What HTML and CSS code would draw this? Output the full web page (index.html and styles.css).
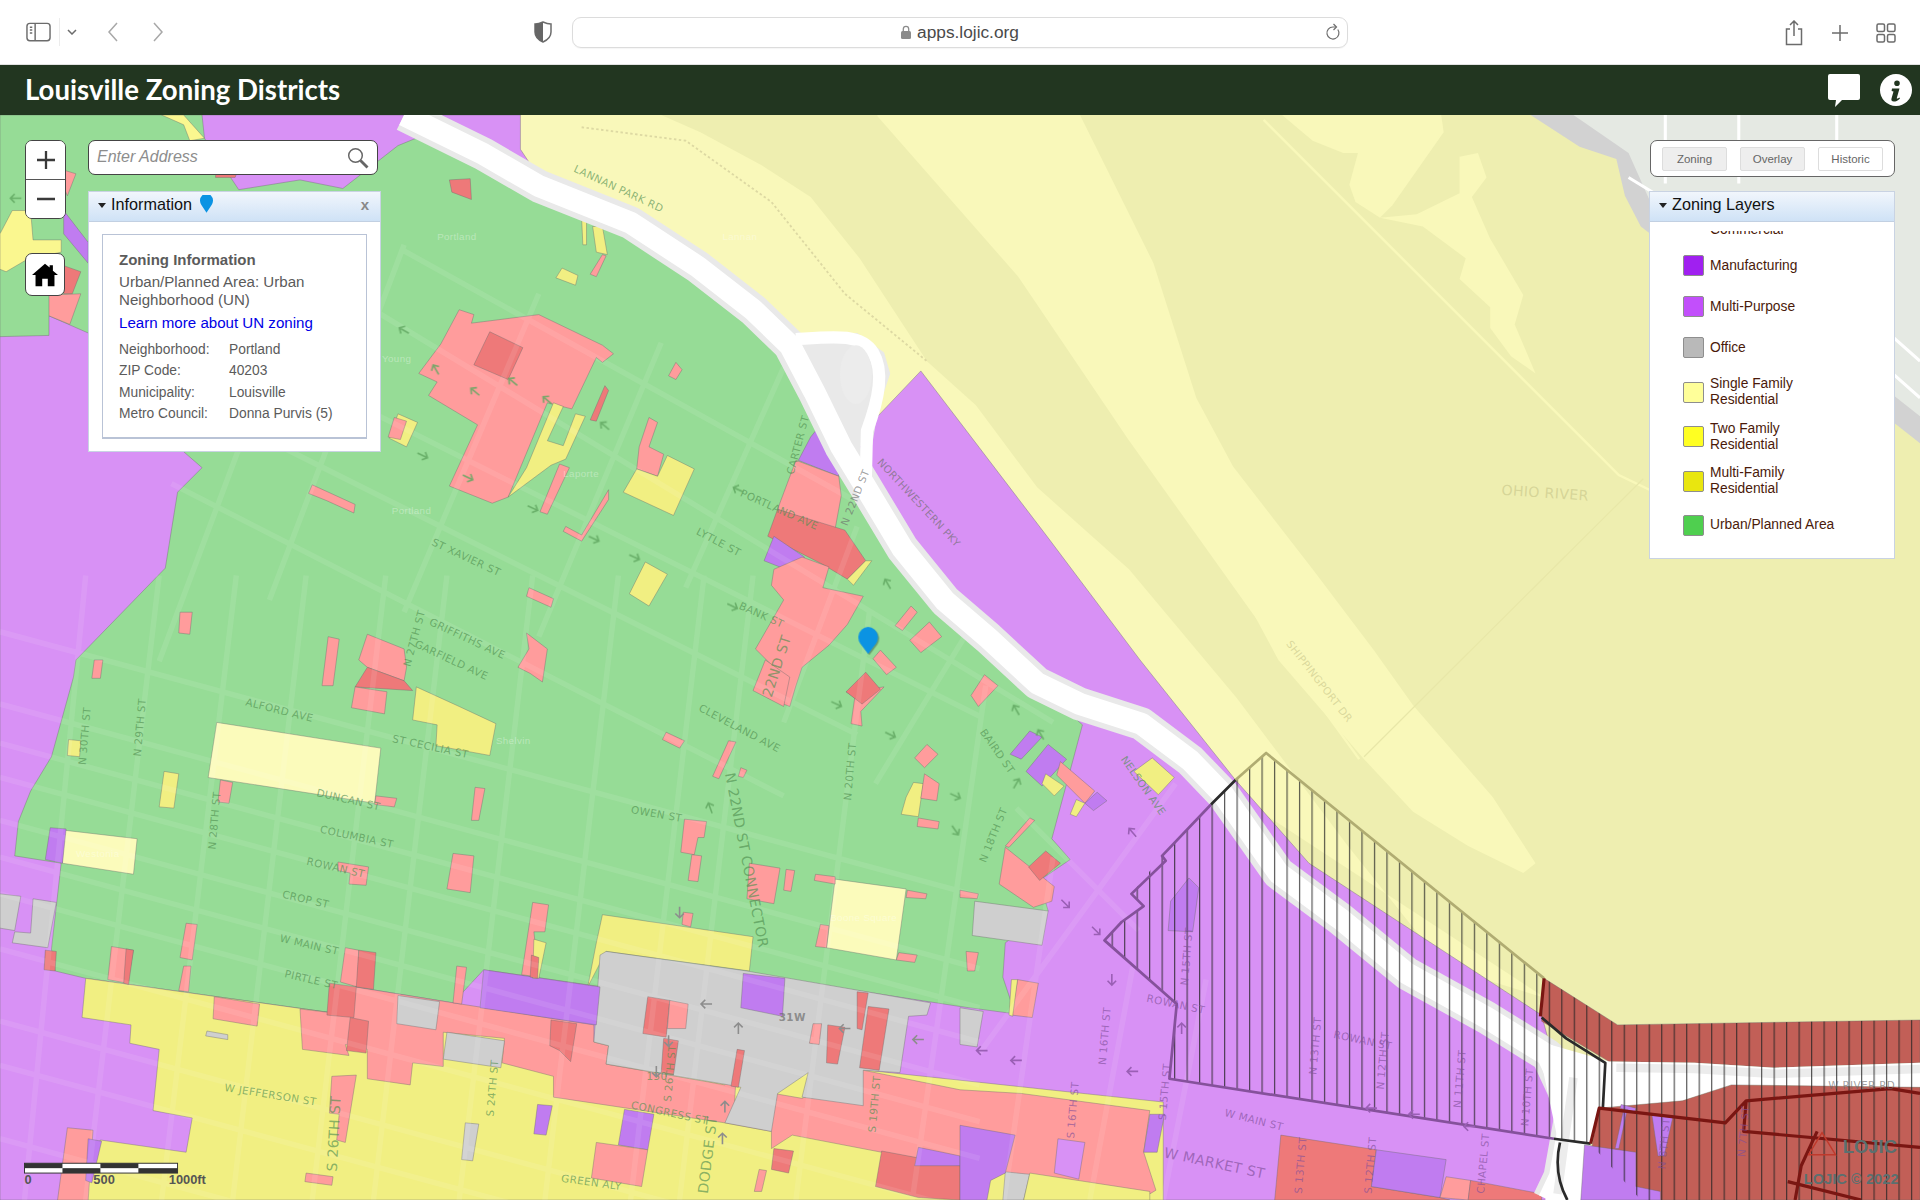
FILE: index.html
```html
<!DOCTYPE html>
<html lang="en">
<head>
    <meta charset="UTF-8">
    <title>Louisville Zoning Districts</title>
    <link rel="stylesheet" href="styles.css">
</head>
<body>
    <div class="toolbar">
        <div class="toolbar-left">
            <svg class="ico-sidebar" viewBox="0 0 26 20"><rect x="1" y="1" width="24" height="18" rx="3"/><path d="M9.5 1v18M4 5h2.5M4 8h2.5M4 11h2.5"/></svg>
            <span class="divider"></span>
            <svg class="ico-chevron" viewBox="0 0 10 6"><path d="M1 1l4 4 4-4"/></svg>
            <svg class="ico-nav back" viewBox="0 0 12 20"><path d="M10 1L2 10l8 9"/></svg>
            <svg class="ico-nav forward" viewBox="0 0 12 20"><path d="M2 1l8 9-8 9"/></svg>
        </div>
        <svg class="ico-shield" viewBox="0 0 18 22"><path d="M9 1c3 1.4 5.5 2 8 2v8c0 4.5-3.5 8-8 10-4.500-2-8-5.500-8-10V3c2.500 0 5-.6 8-2z" fill="none"/><path d="M9 1c-3 1.4-5.5 2-8 2v8c0 4.5 3.500 8 8 10z" fill="#666" stroke="none"/></svg>
        <div class="address">
            <svg class="ico-lock" viewBox="0 0 10 14"><rect x="0" y="6" width="10" height="8" rx="1.5"/><path d="M2.3 6V4a2.7 2.7 0 015.4 0v2" fill="none" stroke="#8b8b8b" stroke-width="1.3"/></svg>
            <span>apps.lojic.org</span>
            <svg class="ico-reload" viewBox="0 0 16 18"><path d="M12.8 6.500A6 6 0 1 1 8 4h3"/><path d="M8.5 1l3 3-3 3"/></svg>
        </div>
        <div class="toolbar-right">
            <svg class="ico-share" viewBox="0 0 20 26"><path d="M6 9H2.5v15.5h15V9H14M10 16V1.500M6 5l4-4 4 4"/></svg>
            <svg class="ico-plus" viewBox="0 0 18 18"><path d="M9 1v16M1 9h16"/></svg>
            <svg class="ico-tabs" viewBox="0 0 20 20"><rect x="1" y="1" width="7.500" height="7.500" rx="1.5"/><rect x="11.500" y="1" width="7.500" height="7.500" rx="1.5"/><rect x="1" y="11.500" width="7.500" height="7.500" rx="1.5"/><rect x="11.500" y="11.500" width="7.500" height="7.500" rx="1.5"/></svg>
        </div>
    </div>

    <header class="app-header">
        <h1>Louisville Zoning Districts</h1>
        <div class="header-icons">
            <svg class="ico-chat" viewBox="0 0 32 33"><path d="M2 0h28a2 2 0 012 2v22a2 2 0 01-2 2H14l-7 7 1-7H2a2 2 0 01-2-2V2a2 2 0 012-2z"/></svg>
            <svg class="ico-info" viewBox="0 0 32 32"><circle cx="16" cy="16" r="16" fill="#fff"/><path d="M17 6.500a2.800 2.800 0 110 5.600 2.800 2.800 0 010-5.600zM12 14.500h7.500l-2.700 9.500c-.2.800.5.900 2.600-.6l.6 1c-2.500 2.200-4.200 3.100-6.200 3.100-2 0-2.800-1-2.300-3l2-7-1.900-.4z" fill="#223620"/></svg>
        </div>
    </header>

    <main class="map">
        <svg class="map-canvas" viewBox="0 94 1568 886" preserveAspectRatio="none">
            <defs>
                <pattern id="hatch" patternUnits="userSpaceOnUse" width="10.2" height="10">
                    <line x1="0.5" y1="0" x2="0.5" y2="10" stroke="#222" stroke-opacity=".75" stroke-width="1"/>
                </pattern>
                <path id="arrow" d="M-4.500 0H4.500M-1 -3.500L-4.500 0L-1 3.500" fill="none" stroke-width="1.3"/>
            </defs>

            <!-- river and riverside zones -->
            <rect class="river" x="0" y="94" width="1568" height="886"/>
            <polygon class="pale" points="717,94 882,94 942,215 977,325 1007,381 1072,465 1122,531 1154,576 1219,651 1254,705 1244,713 1199,691 1154,663 1114,620 1044,539 1022,498 922,358 832,225"/>
            <polygon class="pale" points="425,94 540,94 572,108 622,135 662,161 702,211 757,295 797,331 847,398 922,465 1010,570 1100,690 1180,790 1262,815 1010,650 700,400 425,150"/>
            <polygon class="pale" points="1047,94 1177,94 1179,108 1137,168 1127,178 1107,165 1102,151 1109,125 1097,125 1072,115"/>
            <polygon class="pale" points="1127,178 1157,175 1192,158 1192,128 1207,125 1214,145 1202,161 1217,195 1244,241 1237,265 1254,305 1234,291 1217,268 1217,251 1192,228 1197,211 1162,185"/>
            <path class="pale-line" d="M717 94L832 225L922 358L1022 498L1110 620M1032 98L1322 388L1347 400"/>
            <path class="pale-line faint" d="M1114 618L1342 391"/>
            <path class="rail" d="M475 104L560 115L630 165L690 240L757 295"/>

            <!-- corner of the base map beyond the county data -->
            <polygon class="base-gray" points="1250,94 1568,94 1568,362 1540,340 1340,185 1327,160 1320,130 1290,120"/>
            <polygon class="base-light" points="1285,94 1568,94 1568,340 1530,310 1350,170 1330,125"/>
            <path class="base-street" d="M1360 94V150M1420 94V150M1500 94V135H1530M1330 145L1420 200M1540 270L1568 295M1540 300L1568 325"/>

            <!-- land -->
            <polygon class="z-purple" points="0,94 425,94 425,122 445,152 515,182 570,218 615,253 645,282 665,320 700,345 712,345 752,303 855,438 931,539 1009,637 1069,705 1259,829 1300,980 0,980"/>
            <polygon class="z-green" points="0,94 165,94 167,113 195,155 245,147 280,154 325,119 352,108 395,126 440,152 515,182 570,218 615,253 645,282 665,320 687,365 707,398 737,448 772,491 807,521 847,558 884,592 859,685 874,702 849,719 856,744 821,770 819,798 829,828 784,822 500,778 492,806 395,792 370,819 290,806 270,827 70,799 45,793 42,775 50,705 12,699 15,671 25,646 42,618 60,553 62,539 135,464 145,402 165,382 150,369 72,272 40,258 40,274 0,275"/>
            <polygon class="z-yellow-l" points="0,191 10,172 25,172 27,196 50,196 50,206 22,212 5,222 0,220"/>
            <polygon class="z-yellow-l" points="132,94 150,94 167,113 155,115 150,102"/>
            <polygon class="z-pink" points="52,139 62,142 55,160 50,148"/>
            <polygon class="z-dpurple" points="52,172 72,198 72,215 52,191"/>
            <polygon class="z-dark" points="52,217 66,222 59,240 52,240"/>
            <polygon class="z-pink" points="40,241 66,240 57,265 40,258"/>
            <polygon class="z-dark" points="178,120 200,125 192,145 176,145"/>

            <!-- west end blocks -->
            <polygon class="z-yellow" points="70,799 67,831 107,837 106,852 130,857 125,907 157,913 152,941 82,931 62,980 950,980 950,900 270,827"/>
            <polygon class="z-yellow" points="492,747 615,765 612,793 495,777 480,806 487,770"/>
            <polygon class="z-pink" points="245,824 247,857 285,862 282,853 300,857 300,881 335,886 337,868 362,871 362,843 412,848 410,868 452,879 452,896 592,917 630,924 630,938 647,927 720,941 784,952 834,960 939,975 944,972 934,941 939,907 834,893 784,890 705,874 655,897 632,893 600,899 602,862 592,886 495,869 497,854 485,851 485,837 370,819 290,806 270,827"/>
            <polygon class="z-gray" points="495,777 610,793 760,819 757,829 742,830 735,876 705,874 705,903 655,896 660,876 635,893 630,924 592,917 605,888 595,886 495,869 497,854 485,851 490,780"/>
            <polygon class="z-dpurple" points="395,792 490,806 487,837 392,823"/>
            <polygon class="z-dpurple" points="607,795 641,799 639,830 605,823"/>
            <polygon class="z-pale" points="177,590 311,611 306,656 170,635"/>
            <polygon class="z-pale" points="52,678 112,685 109,714 51,705"/>
            <polygon class="z-dpurple" points="41,676 54,677 51,705 37,702"/>
            <polygon class="z-pale" points="682,718 740,726 732,784 675,774"/>
            <polygon class="z-gray" points="0,730 17,732 12,760 0,758"/>
            <polygon class="z-gray" points="27,734 46,737 39,774 10,770 12,761 25,762"/>
            <polygon class="z-gray" points="325,813 359,818 356,841 324,836"/>
            <polygon class="z-gray" points="365,843 412,850 409,872 362,865"/>
            <polygon class="z-gray" points="169,842 186,845 186,849 168,846"/>
            <polygon class="z-gray" points="380,917 391,918 386,948 377,947"/>
            <polygon class="z-gray" points="796,736 856,744 851,772 794,764"/>
            <polygon class="z-gray" points="784,823 803,826 798,855 784,853"/>
            <polygon class="z-gray" points="821,957 841,959 836,980 819,980"/>

            <!-- portland pink blocks -->
            <polygon class="z-pink" points="375,253 387,257 385,264 440,257 492,282 501,289 492,296 487,292 467,334 447,329 415,406 402,411 367,397 390,347 350,323 357,312 342,305 360,281"/>
            <polygon class="z-dark" points="400,271 427,284 415,310 387,298"/>
            <polygon class="z-yellow" points="452,329 460,332 447,360 460,364 470,338 478,340 462,375 450,380 415,406 430,382"/>
            <polygon class="z-dark" points="367,147 384,146 385,163 369,157"/>
            <polygon class="z-yellow" points="475,178 479,178 479,200 476,200"/>
            <polygon class="z-yellow" points="484,185 492,185 496,208 487,206"/>
            <polygon class="z-pink" points="492,208 495,209 487,226 482,224"/>
            <polygon class="z-yellow" points="459,219 472,225 470,233 454,227"/>
            <polygon class="z-pink" points="552,296 557,302 552,310 546,307"/>
            <polygon class="z-dark" points="494,315 497,319 487,344 482,343"/>
            <polygon class="z-yellow" points="325,338 341,345 332,365 318,358"/>
            <polygon class="z-pink" points="322,341 332,344 327,359 317,357"/>
            <polygon class="z-pink" points="530,341 537,345 530,365 542,371 537,389 520,383 522,365"/>
            <polygon class="z-yellow" points="545,372 567,383 550,421 509,402 520,383 537,389"/>
            <polygon class="z-pink" points="255,396 290,412 289,419 267,409 252,403"/>
            <polygon class="z-pink" points="497,400 475,437 462,430 460,434 475,442 497,408"/>
            <polygon class="z-pink" points="457,379 465,382 447,420 441,418"/>
            <polygon class="z-yellow" points="527,459 545,469 530,495 514,485"/>
            <polygon class="z-pink" points="432,480 452,489 450,496 430,487"/>
            <polygon class="z-pink" points="147,500 157,500 155,518 146,517"/>
            <polygon class="z-dpurple" points="662,357 670,347 682,359 685,389 652,376"/>
            <polygon class="z-pink" points="650,376 685,389 687,405 682,432 635,416"/>
            <polygon class="z-dark" points="635,416 690,433 707,458 692,473 672,461 627,438"/>
            <polygon class="z-dpurple" points="632,438 657,455 652,469 624,458"/>
            <polygon class="z-yellow" points="712,458 697,478 692,473 707,458"/>
            <polygon class="z-pink" points="655,455 677,463 672,480 705,487 692,510 677,527 655,545 650,560 645,577 627,570 632,545 617,530 640,490 630,478 632,465"/>
            <polygon class="z-pink" points="744,495 749,500 737,515 731,511"/>
            <polygon class="z-pink" points="759,508 769,520 752,533 743,523"/>
            <polygon class="z-pink" points="719,531 732,545 724,551 713,538"/>
            <polygon class="z-pink" points="722,561 703,581 704,593 695,591 698,570 691,565"/>
            <polygon class="z-dark" points="707,549 719,563 704,575 691,565"/>
            <polygon class="z-pink" points="804,551 815,560 799,577 793,568"/>
            <polygon class="z-pink" points="77,539 84,539 82,554 75,554"/>
            <polygon class="z-pink" points="268,520 277,522 272,560 263,560"/>
            <polygon class="z-pink" points="300,518 330,530 332,545 330,556 300,545 293,539"/>
            <polygon class="z-dark" points="300,545 330,556 337,564 290,561"/>
            <polygon class="z-pink" points="290,561 316,565 314,583 287,578"/>
            <polygon class="z-yellow" points="340,561 375,577 405,591 400,617 356,609 357,592 337,588"/>
            <polygon class="z-pink" points="430,517 447,530 443,557 433,550 423,545 432,530"/>
            <polygon class="z-pink" points="544,598 559,605 555,611 541,604"/>
            <polygon class="z-pink" points="595,605 601,606 587,636 582,634"/>
            <polygon class="z-pink" points="605,627 610,629 607,635 603,634"/>
            <polygon class="z-yellow" points="56,604 66,605 65,618 55,617"/>
            <polygon class="z-yellow" points="134,630 146,632 142,660 130,659"/>
            <polygon class="z-pink" points="180,637 190,639 187,656 178,655"/>
            <polygon class="z-pink" points="307,650 324,652 322,659 306,657"/>
            <polygon class="z-pink" points="388,643 396,644 391,670 385,670"/>
            <polygon class="z-pink" points="370,697 387,699 384,729 365,726"/>
            <polygon class="z-pink" points="276,704 301,708 299,723 285,722 286,713 276,711"/>
            <polygon class="z-pink" points="559,669 577,671 575,684 570,684 567,698 556,696"/>
            <polygon class="z-pink" points="565,698 573,699 570,720 562,719"/>
            <polygon class="z-pink" points="612,705 637,709 632,738 610,734"/>
            <polygon class="z-pink" points="642,710 649,711 646,728 640,727"/>
            <polygon class="z-pink" points="666,714 682,716 682,722 665,719"/>
            <polygon class="z-pink" points="741,727 757,730 756,734 740,733"/>
            <polygon class="z-pink" points="670,755 677,756 675,774 666,773"/>
            <polygon class="z-pink" points="734,778 749,780 747,786 732,784"/>
            <polygon class="z-pink" points="750,668 767,671 766,677 749,675"/>
            <polygon class="z-yellow" points="746,639 754,640 750,667 736,665 740,651"/>
            <polygon class="z-pink" points="755,632 767,640 765,654 752,652"/>
            <polygon class="z-pink" points="757,608 766,616 755,627 747,619"/>
            <polygon class="z-pink" points="625,539 645,553 640,577 615,564"/>
            <polygon class="z-pink" points="152,754 161,755 157,784 147,782"/>
            <polygon class="z-pink" points="150,789 156,789 154,810 146,809"/>
            <polygon class="z-pink" points="91,773 109,776 104,803 88,800"/>
            <polygon class="z-dark" points="103,775 109,776 105,804 101,803"/>
            <polygon class="z-dark" points="37,776 46,777 45,793 36,792"/>
            <polygon class="z-pink" points="435,737 448,739 445,761 436,761 440,798 426,796"/>
            <polygon class="z-yellow" points="436,767 446,770 440,799 435,799"/>
            <polygon class="z-dark" points="434,780 440,782 439,799 433,798"/>
            <polygon class="z-pink" points="558,745 566,746 564,757 557,755"/>
            <polygon class="z-pink" points="282,774 293,776 292,806 278,802"/>
            <polygon class="z-dark" points="293,776 307,778 305,808 291,806"/>
            <polygon class="z-pink" points="373,789 381,790 377,820 370,819"/>
            <polygon class="z-dark" points="269,803 291,806 289,831 267,829"/>
            <polygon class="z-dark" points="286,831 301,834 299,860 283,858"/>
            <polygon class="z-pink" points="175,814 212,820 210,838 174,832"/>
            <polygon class="z-dark" points="450,833 471,836 466,867 457,858 449,854"/>
            <polygon class="z-dark" points="529,814 547,817 544,847 525,844"/>
            <polygon class="z-pink" points="547,817 562,820 560,840 545,840"/>
            <polygon class="z-dark" points="542,848 554,850 550,878 540,876"/>
            <polygon class="z-dark" points="602,857 608,858 603,888 597,887"/>
            <polygon class="z-pink" points="664,836 671,836 669,853 661,852"/>
            <polygon class="z-dark" points="676,837 690,839 684,869 675,868"/>
            <polygon class="z-dark" points="709,822 726,824 718,874 702,872"/>
            <polygon class="z-dark" points="700,810 709,811 704,841 700,840"/>
            <polygon class="z-dpurple" points="439,902 451,903 446,927 436,926"/>
            <polygon class="z-dpurple" points="510,906 534,910 529,939 505,935"/>
            <polygon class="z-pink" points="487,933 529,939 524,969 483,962"/>
            <polygon class="z-pink" points="250,958 272,961 271,968 249,965"/>
            <polygon class="z-pink" points="620,955 626,956 622,973 616,973"/>
            <polygon class="z-dark" points="632,938 648,940 644,958 630,955"/>
            <polygon class="z-pink" points="271,879 291,878 282,933 275,931 277,910 269,909"/>
            <polygon class="z-pink" points="55,921 76,923 72,980 47,980"/>
            <polygon class="z-dpurple" points="72,930 83,932 75,966 70,964"/>

            <!-- east of 20th -->
            <polygon class="z-dark" points="720,940 784,952 784,980 750,978 715,969"/>
            <polygon class="z-dpurple" points="750,937 784,944 784,952 747,952"/>
            <polygon class="z-dpurple" points="784,919 829,927 821,958 809,964 806,980 784,980"/>
            <polygon class="z-yellow" points="841,958 939,973 939,980 836,980"/>
            <polygon class="z-purple" points="864,930 886,933 881,963 861,958"/>
            <polygon class="z-dpurple" points="939,910 951,910 945,941 934,941"/>
            <polygon class="z-dark" points="1046,927 1124,939 1120,969 1176,978 1184,980 1041,980"/>
            <polygon class="z-dpurple" points="1124,939 1181,947 1176,978 1120,969"/>
            <polygon class="z-pink" points="1181,961 1201,964 1199,980 1176,978"/>
            <polygon class="z-dark" points="1201,964 1259,975 1259,980 1199,980"/>
            <polygon class="z-dpurple" points="841,597 851,602 834,620 825,616"/>
            <polygon class="z-dpurple" points="856,608 871,620 851,642 838,630"/>
            <polygon class="z-yellow" points="854,632 869,642 861,650 851,640"/>
            <polygon class="z-pink" points="866,622 894,646 886,656 863,633"/>
            <polygon class="z-dpurple" points="896,647 904,654 893,662 886,656"/>
            <polygon class="z-yellow" points="879,653 886,656 879,667 874,665"/>
            <polygon class="z-pink" points="841,668 845,670 824,692 821,691"/>
            <polygon class="z-pink" points="821,692 861,724 859,736 844,741 816,722"/>
            <polygon class="z-dark" points="854,695 866,705 849,719 840,708"/>
            <polygon class="z-yellow" points="941,619 959,635 946,649 926,630"/>
            <polygon class="z-pink" points="831,800 848,803 843,831 826,829"/>
            <polygon class="z-yellow" points="826,800 831,800 827,830 824,829"/>
            <polygon class="z-pink" points="789,777 799,778 796,793 790,793"/>
            <polygon class="z-pink" points="784,727 799,730 798,734 784,733"/>
            <polygon class="z-dpurple" points="971,717 979,725 974,761 954,760 956,736"/>

            <!-- streets show through the zoning layer -->
            <path class="streets" d="M0 516L800 732M0 575L800 791M0 607L800 823M0 635L800 851M0 670L800 886M0 700L800 916M0 730L800 946M0 775L1000 1045M0 834L960 1094M0 870L800 1086M0 930L500 1065
                M70 470L20 980M130 470L70 980M193 470L132 980M250 470L190 980M315 470L255 980M365 470L305 980M435 470L375 980M505 470L445 980M575 470L515 980M615 470L555 980M710 500L650 980M805 560L745 980M860 700L820 980M925 790L890 980M985 800L950 980
                M140 320L700 600M140 395L640 650M230 300L800 585M300 250L860 590M330 205L700 410M130 540L220 300M220 490L330 200M330 500L440 240M440 520L540 280M560 480L640 300M640 590L700 430M715 640L800 500M830 660L930 760M960 640L800 860"/>

            <!-- white shoulders of I-64 -->
            <path class="road-casing" d="M330 94L395 126L440 152L515 182L570 218L615 253L645 282L665 320L687 365L707 398L737 448L772 491L807 521L847 558L882 575L932 591L972 621L999 649L1044 713L1094 750L1149 795L1214 831L1264 862L1284 905L1274 961L1265 980"/>
            <polygon class="road-fill-gray" points="647,278 700,272 722,288 727,305 717,335 712,365 692,365 667,338"/>
            <path class="road-white" d="M330 94L395 126L440 152L515 182L570 218L615 253L645 282L665 320L687 365L707 398L737 448L772 491L807 521L847 558L882 575L932 591L972 621L999 649L1044 713L1094 750L1149 795L1214 831L1264 862L1284 905L1274 961L1265 980"/>
            <path class="road-white ramp" d="M650 277C680 275 703 272 713 288C722 303 718 325 708 352L707 395"/>
            <ellipse class="road-ramp" cx="699" cy="306" rx="13" ry="24"/>

            <!-- downtown and the riverfront -->
            <polygon class="z-red" points="1261,799 1321,837 1568,833 1568,868 1449,872 1384,868 1314,867 1259,834"/>
            <polygon class="road-block" points="1255,850 1314,867 1384,868 1449,872 1568,868 1568,888 1414,886 1374,899 1306,905 1299,934 1291,980 1262,980 1272,930"/>
            <path class="road-streak" d="M1320 872L1384 873L1449 877L1568 873M1285 880L1278 930L1272 975"/>
            <polygon class="z-red" points="1306,905 1374,899 1414,886 1568,888 1568,980 1292,980"/>
            <polygon class="z-dpurple" points="1294,935 1336,941 1336,969 1356,973 1356,980 1291,980"/>
            <polygon class="z-dpurple" points="1324,902 1336,905 1335,908 1323,905"/>
            <polygon class="z-dpurple" points="1326,906 1329,906 1322,938 1319,938"/>
            <polygon class="z-dpurple" points="1349,910 1366,913 1359,944 1354,944"/>

            <!-- overlay districts -->
            <polygon class="hatch" points="1034,615 1261,799 1321,837 1568,833 1568,980 1340,980 1299,934 1269,930 955,881 961,820 902,768 916,753 934,740 924,730 949,699 989,657 1009,637"/>
            <polyline class="line-olive" points="1009,637 1034,615 1261,799"/>
            <polyline class="line-purple" points="989,657 949,699 952,703 924,730 934,740 916,753 902,768 961,820 955,881 1269,930"/>
            <path class="line-black" d="M1009 637L989 657M1269 930L1299 934M1259 831L1279 848L1311 868L1309 905M1274 933C1270 950 1272 965 1280 980"/>
            <path class="line-red" d="M1261 799L1258 830M1299 934L1306 905L1409 917L1426 899L1544 889L1568 893M1426 899L1424 924L1568 937M1484 924L1471 952L1466 980M1460 965L1520 980"/>

            <!-- road labels -->
            <g class="labels">
                <text transform="translate(468 140) rotate(25)">LANNAN PARK RD</text>
                <text class="soft" transform="translate(357 196)">Portland</text>
                <text class="soft" transform="translate(590 196)">Lannan</text>
                <text class="soft" transform="translate(312 296)">Young</text>
                <text class="soft" transform="translate(460 390)">Laporte</text>
                <text class="soft" transform="translate(320 420)">Portland</text>
                <text transform="translate(352 445) rotate(25)">ST XAVIER ST</text>
                <text transform="translate(568 436) rotate(28)">LYTLE ST</text>
                <text transform="translate(604 405) rotate(24)">PORTLAND AVE</text>
                <text transform="translate(603 497) rotate(24)">BANK ST</text>
                <text transform="translate(350 510) rotate(25)">GRIFFITHS AVE</text>
                <text transform="translate(338 528) rotate(25)">GARFIELD AVE</text>
                <text transform="translate(335 545) rotate(-75)">N 27TH ST</text>
                <text transform="translate(200 576) rotate(14)">ALFORD AVE</text>
                <text transform="translate(320 606) rotate(12)">ST CECILIA ST</text>
                <text class="soft" transform="translate(405 608)">Shelvin</text>
                <text transform="translate(258 650) rotate(13)">DUNCAN ST</text>
                <text transform="translate(261 680) rotate(12)">COLUMBIA ST</text>
                <text transform="translate(250 706) rotate(13)">ROWAN ST</text>
                <text transform="translate(230 733) rotate(13)">CROP ST</text>
                <text transform="translate(228 769) rotate(13)">W MAIN ST</text>
                <text transform="translate(232 798) rotate(13)">PIRTLE ST</text>
                <text transform="translate(183 891) rotate(9)">W JEFFERSON ST</text>
                <text transform="translate(515 664) rotate(10)">OWEN ST</text>
                <text transform="translate(570 580) rotate(28)">CLEVELAND AVE</text>
                <text transform="translate(70 625) rotate(-85)">N 30TH ST</text>
                <text transform="translate(115 618) rotate(-85)">N 29TH ST</text>
                <text transform="translate(176 694) rotate(-85)">N 28TH ST</text>
                <text transform="translate(695 654) rotate(-85)">N 20TH ST</text>
                <text transform="translate(805 705) rotate(-68)">N 18TH ST</text>
                <text class="big" transform="translate(592 632) rotate(79)">N 22ND ST CONNECTOR</text>
                <text class="big" transform="translate(630 570) rotate(-72)">22ND ST</text>
                <text class="grey" transform="translate(692 430) rotate(-68)">N 22ND ST</text>
                <text class="grey" transform="translate(716 378) rotate(47)">NORTHWESTERN PKY</text>
                <text transform="translate(648 388) rotate(-75)">CARTER ST</text>
                <text transform="translate(800 598) rotate(55)">BAIRD ST</text>
                <text transform="translate(915 620) rotate(55)">NELSON AVE</text>
                <text class="pale-text" transform="translate(1050 526) rotate(52)">SHIPPINGPORT DR</text>
                <text class="pale-text big" transform="translate(1226 404) rotate(4)">OHIO RIVER</text>
                <text class="soft" transform="translate(62 700)">Westonia</text>
                <text class="soft" transform="translate(678 752)">Boone Square</text>
                <text transform="translate(548 900) rotate(-85)">S 26TH ST</text>
                <text transform="translate(403 912) rotate(-85)">S 24TH ST</text>
                <text class="big" transform="translate(275 957) rotate(-87)">S 26TH ST</text>
                <text class="big" transform="translate(578 975) rotate(-83)">DODGE ST</text>
                <text transform="translate(458 965) rotate(8)">GREEN ALY</text>
                <text transform="translate(515 905) rotate(12)">CONGRESS ST</text>
                <text transform="translate(715 925) rotate(-85)">S 19TH ST</text>
                <text class="shield" transform="translate(636 834)">31W</text>
                <text transform="translate(528 882)">150</text>
                <text class="violet" transform="translate(936 818) rotate(12)">ROWAN ST</text>
                <text class="violet" transform="translate(956 880) rotate(14)" x="50" y="20">W MAIN ST</text>
                <text class="violet big" transform="translate(950 945) rotate(12)">W MARKET ST</text>
                <text class="violet" transform="translate(903 870) rotate(-85)">N 16TH ST</text>
                <text class="violet" transform="translate(970 805) rotate(-85)">N 15TH ST</text>
                <text class="violet" transform="translate(1030 835) rotate(12)" x="60">ROWAN ST</text>
                <text class="violet" transform="translate(952 915) rotate(-85)">S 15TH ST</text>
                <text class="violet" transform="translate(1075 878) rotate(-85)">N 13TH ST</text>
                <text class="violet" transform="translate(1130 890) rotate(-85)">N 12TH ST</text>
                <text class="violet" transform="translate(1193 905) rotate(-85)">N 11TH ST</text>
                <text class="violet" transform="translate(1248 920) rotate(-85)">N 10TH ST</text>
                <text class="violet" transform="translate(877 930) rotate(-85)">S 16TH ST</text>
                <text class="violet" transform="translate(1063 975) rotate(-85)">S 13TH ST</text>
                <text class="violet" transform="translate(1120 975) rotate(-85)">S 12TH ST</text>
                <text class="violet" transform="translate(1212 975) rotate(-85)">CHAPEL ST</text>
                <text class="grey" transform="translate(1493 889)">W RIVER RD</text>
                <text class="violet" transform="translate(1360 955) rotate(-85)">N 8TH ST</text>
                <text class="violet" transform="translate(1425 945) rotate(-85)">N 7TH ST</text>
            </g>

            <!-- one way arrows -->
            <g class="arrows-green">
                <use href="#arrow" transform="translate(13 162) rotate(0)"/>
                <use href="#arrow" transform="translate(77 185) rotate(20)"/>
                <use href="#arrow" transform="translate(330 270) rotate(30)"/>
                <use href="#arrow" transform="translate(356 302) rotate(60)"/>
                <use href="#arrow" transform="translate(388 320) rotate(40)"/>
                <use href="#arrow" transform="translate(419 312) rotate(40)"/>
                <use href="#arrow" transform="translate(447 327) rotate(40)"/>
                <use href="#arrow" transform="translate(345 372) rotate(205)"/>
                <use href="#arrow" transform="translate(382 390) rotate(205)"/>
                <use href="#arrow" transform="translate(435 415) rotate(205)"/>
                <use href="#arrow" transform="translate(485 440) rotate(205)"/>
                <use href="#arrow" transform="translate(518 455) rotate(205)"/>
                <use href="#arrow" transform="translate(494 348) rotate(40)"/>
                <use href="#arrow" transform="translate(603 400) rotate(25)"/>
                <use href="#arrow" transform="translate(598 495) rotate(205)"/>
                <use href="#arrow" transform="translate(725 477) rotate(60)"/>
                <use href="#arrow" transform="translate(727 600) rotate(205)"/>
                <use href="#arrow" transform="translate(683 575) rotate(205)"/>
                <use href="#arrow" transform="translate(780 650) rotate(205)"/>
                <use href="#arrow" transform="translate(830 580) rotate(60)"/>
                <use href="#arrow" transform="translate(830 640) rotate(120)"/>
                <use href="#arrow" transform="translate(850 600) rotate(60)"/>
                <use href="#arrow" transform="translate(580 660) rotate(70)"/>
                <use href="#arrow" transform="translate(780 678) rotate(235)"/>
            </g>
            <g class="arrows-grey">
                <use href="#arrow" transform="translate(577 820)"/>
                <use href="#arrow" transform="translate(603 840) rotate(90)"/>
                <use href="#arrow" transform="translate(690 840)"/>
                <use href="#arrow" transform="translate(750 849)"/>
                <use href="#arrow" transform="translate(546 850) rotate(-90)"/>
                <use href="#arrow" transform="translate(536 875) rotate(-90)"/>
                <use href="#arrow" transform="translate(555 745) rotate(-90)"/>
                <use href="#arrow" transform="translate(592 904) rotate(90)"/>
                <use href="#arrow" transform="translate(590 930) rotate(90)"/>
            </g>
            <g class="arrows-violet">
                <use href="#arrow" transform="translate(870 738) rotate(225)"/>
                <use href="#arrow" transform="translate(925 680) rotate(50)"/>
                <use href="#arrow" transform="translate(895 760) rotate(225)"/>
                <use href="#arrow" transform="translate(908 800) rotate(-90)"/>
                <use href="#arrow" transform="translate(802 858)"/>
                <use href="#arrow" transform="translate(830 866)"/>
                <use href="#arrow" transform="translate(925 875)"/>
                <use href="#arrow" transform="translate(1120 905)"/>
                <use href="#arrow" transform="translate(1155 910)"/>
                <use href="#arrow" transform="translate(1200 920)"/>
                <use href="#arrow" transform="translate(965 840) rotate(90)"/>
            </g>

            <!-- selected parcel -->
            <g class="marker" transform="translate(709 523)">
                <path d="M0 11L-6.5 2.5A8 8.5 0 1 1 6.5 2.5Z" transform="translate(1 1)" fill="#4c6a4c" fill-opacity=".55"/>
                <path d="M0 11L-6.5 2.5A8 8.5 0 1 1 6.5 2.5Z" fill="#0b93e3"/>
            </g>

            <!-- scale and credit -->
            <g class="scale">
                <rect x="20" y="950" width="125" height="8" fill="#fff" stroke="#333" stroke-width=".8"/>
                <rect x="20" y="950" width="31" height="4" fill="#333"/>
                <rect x="82" y="950" width="31" height="4" fill="#333"/>
                <rect x="51" y="954" width="31" height="4" fill="#333"/>
                <rect x="113" y="954" width="32" height="4" fill="#333"/>
                <text x="23" y="967">0</text>
                <text x="85" y="967">500</text>
                <text x="153" y="967">1000ft</text>
            </g>
            <text class="credit big-credit" x="1505" y="942">LOJIC</text>
            <text class="credit" x="1473" y="967">LOJIC © 2022</text>
            <polygon class="credit-mark" points="1488,925 1499,943 1477,943"/>
        </svg>

        <div class="zoom-ctrl">
            <button class="ctrl-btn" aria-label="Zoom in">
                <svg viewBox="0 0 20 20"><path d="M10 1v18M1 10h18"/></svg>
            </button>
            <button class="ctrl-btn" aria-label="Zoom out">
                <svg viewBox="0 0 20 20"><path d="M1 10h18"/></svg>
            </button>
        </div>
        <button class="ctrl-btn home-btn" aria-label="Home">
            <svg viewBox="0 0 28 24"><path d="M14 0l5 4V1.500h3.500v6L28 12h-3.800v12H17v-8h-6v8H3.800V12H0z" fill="#000"/></svg>
        </button>

        <div class="search">
            <span class="search-hint">Enter Address</span>
            <svg class="ico-search" viewBox="0 0 22 22"><circle cx="8.5" cy="8.5" r="6.8"/><path d="M13.5 13.5L20.500 20.500" stroke-width="2.8"/></svg>
        </div>

        <section class="panel info-panel">
            <div class="panel-head">
                <span class="caret"></span>
                <span class="panel-title">Information</span>
                <svg class="ico-pin" viewBox="0 0 14 19"><path d="M7 19L1.500 10.500A7 7.500 0 1 1 12.500 10.500Z" fill="#0b93e3"/></svg>
                <span class="panel-close">x</span>
            </div>
            <div class="info-box">
                <div class="info-title">Zoning Information</div>
                <div class="info-desc">Urban/Planned Area: Urban Neighborhood (UN)</div>
                <div class="info-link">Learn more about UN zoning</div>
                <div class="info-table">
                    <span>Neighborhood:</span><span>Portland</span>
                    <span>ZIP Code:</span><span>40203</span>
                    <span>Municipality:</span><span>Louisville</span>
                    <span>Metro Council:</span><span>Donna Purvis (5)</span>
                </div>
            </div>
        </section>

        <div class="tabs">
            <button class="tab">Zoning</button>
            <button class="tab">Overlay</button>
            <button class="tab off">Historic</button>
        </div>

        <section class="panel legend-panel">
            <div class="panel-head">
                <span class="caret"></span>
                <span class="panel-title">Zoning Layers</span>
            </div>
            <div class="legend-scroll">
                <div class="legend-row cut"><span class="swatch hidden"></span><span>Commercial</span></div>
                <div class="legend-row"><span class="swatch s-mfg"></span><span>Manufacturing</span></div>
                <div class="legend-row"><span class="swatch s-multi"></span><span>Multi-Purpose</span></div>
                <div class="legend-row"><span class="swatch s-office"></span><span>Office</span></div>
                <div class="legend-row two first"><span class="swatch s-single"></span><span>Single Family<br>Residential</span></div>
                <div class="legend-row two"><span class="swatch s-two"></span><span>Two Family<br>Residential</span></div>
                <div class="legend-row two"><span class="swatch s-mf"></span><span>Multi-Family<br>Residential</span></div>
                <div class="legend-row last"><span class="swatch s-urban"></span><span>Urban/Planned Area</span></div>
            </div>
        </section>
    </main>
</body>
</html>
```

FILE: styles.css
```css
html, body {
    margin: 0;
    padding: 0;
    width: 1920px;
    height: 1200px;
    overflow: hidden;
    font-family: "Liberation Sans", Arial, sans-serif;
    background: #fff;
}
svg {
    display: block;
}

/* Browser chrome */
.toolbar {
    height: 64px;
    border-bottom: 1px solid #e2e2e2;
    display: flex;
    align-items: center;
    position: relative;
    background: #fff;
    padding-left: 26px;
}
.toolbar svg {
    fill: none;
    stroke: #6c6c6c;
    stroke-width: 1.5;
}
.toolbar-left {
    display: flex;
    align-items: center;
    width: 509px;
}
.ico-sidebar {
    width: 25px;
    height: 20px;
}
.divider {
    width: 1px;
    height: 28px;
    background: #ececec;
    margin-left: 8px;
}
.ico-chevron {
    width: 10px;
    height: 6px;
    margin-left: 7px;
}
.toolbar .ico-nav {
    width: 12px;
    height: 20px;
    stroke: #a8a8a8;
}
.back {
    margin-left: 30px;
}
.forward {
    margin-left: 33px;
}
.ico-shield {
    width: 18px;
    height: 22px;
    margin-left: -1px;
}
.address {
    margin-left: 20px;
    width: 776px;
    height: 31px;
    box-sizing: border-box;
    border: 1px solid #dcdcdc;
    border-radius: 9px;
    display: flex;
    align-items: center;
    justify-content: center;
    gap: 6px;
    position: relative;
    font-size: 17.3px;
    color: #4a4a4a;
    box-shadow: 0 1px 1px rgba(0, 0, 0, 0.04);
}
.toolbar .ico-lock {
    width: 10px;
    height: 14px;
    fill: #8b8b8b;
    stroke: none;
}
.toolbar .ico-reload {
    position: absolute;
    right: 6px;
    top: 5px;
    width: 16px;
    height: 18px;
    stroke-width: 1.2;
}
.toolbar-right {
    position: absolute;
    right: 24px;
    top: 20px;
    display: flex;
    align-items: center;
    gap: 27px;
}
.ico-share {
    width: 20px;
    height: 26px;
}
.ico-plus {
    width: 18px;
    height: 18px;
}
.ico-tabs {
    width: 20px;
    height: 20px;
}

/* App header */
.app-header {
    height: 50px;
    box-sizing: border-box;
    background: #223620;
    display: flex;
    align-items: center;
    justify-content: space-between;
    padding: 0 8px 0 25px;
}
.app-header h1 {
    margin: 0 0 2px;
    font-family: Lato, sans-serif;
    font-size: 27.6px;
    font-weight: 700;
    color: #fff;
}
.header-icons {
    display: flex;
    gap: 20px;
    align-items: center;
}
.ico-chat {
    width: 32px;
    height: 33px;
    fill: #fff;
}
.ico-info {
    width: 32px;
    height: 32px;
}

/* Map */
.map {
    position: relative;
    height: 1085px;
    overflow: hidden;
}
.map-canvas {
    width: 1920px;
    height: 1085px;
}
.river { fill: #eeeeb0; }
.pale { fill: #f9f8ba; }
.pale-line {
    fill: none;
    stroke: #f9f8ba;
    stroke-width: 2;
}
.pale-line.faint {
    stroke-width: 1;
    stroke: #e8e7a8;
}
.rail {
    fill: none;
    stroke: #ddd9a3;
    stroke-width: 1.5;
    stroke-dasharray: 2 2;
}
.base-gray { fill: #d2d2d2; }
.base-light { fill: #e5e9e3; }
.base-street {
    fill: none;
    stroke: #fff;
    stroke-width: 2.5;
}
.z-purple, .z-green, .z-yellow, .z-yellow-l, .z-pink, .z-dark, .z-gray, .z-dpurple, .z-pale, .z-red {
    stroke: #6b6b6b;
    stroke-opacity: 0.55;
    stroke-width: 0.6;
}
.z-purple { fill: #d891f5; }
.z-green { fill: #96dc96; }
.z-yellow { fill: #f1ef82; }
.z-yellow-l { fill: #faf78f; }
.z-pink { fill: #ff9c9c; }
.z-dark { fill: #ee7979; }
.z-gray { fill: #cfcfcf; }
.z-dpurple { fill: #c07cf0; }
.z-pale { fill: #fbfbbb; }
.z-red { fill: #c25f57; }
.streets {
    fill: none;
    stroke: #fff;
    stroke-opacity: 0.09;
    stroke-width: 4.5;
}
.road-casing {
    fill: none;
    stroke: #e9e9e9;
    stroke-width: 27;
    stroke-linejoin: round;
}
.road-fill-gray { fill: #e9e9e9; }
.road-white {
    fill: none;
    stroke: #fff;
    stroke-width: 18;
    stroke-linejoin: round;
}
.road-white.ramp {
    stroke-width: 10;
}
.road-ramp { fill: #ececec; }
.road-block { fill: #fff; }
.road-streak {
    fill: none;
    stroke: #ececec;
    stroke-width: 7;
}
.hatch { fill: url(#hatch); }
.line-olive, .line-purple, .line-black, .line-red {
    fill: none;
    stroke-width: 2.2;
    stroke-linejoin: round;
}
.line-olive { stroke: #b0ac72; }
.line-purple { stroke: #85519b; }
.line-black { stroke: #2b2b2b; }
.line-red { stroke: #7a1612; stroke-width: 2.6; }
.labels text {
    font-family: "DejaVu Sans", sans-serif;
    font-size: 8.5px;
    letter-spacing: 0.3px;
    fill: #4f8e4f;
    fill-opacity: 0.65;
}
.labels text.soft {
    font-family: "Liberation Sans", sans-serif;
    font-size: 8px;
    fill: #fff;
    fill-opacity: 0.35;
}
.labels text.big {
    font-size: 11.5px;
}
.labels text.grey {
    fill: #6c6c6c;
}
.labels text.violet {
    fill: #7f4f99;
}
.labels text.pale-text {
    fill: #c9c78a;
}
.labels text.shield {
    fill: #666;
    font-weight: 700;
}
.arrows-green { stroke: #62a862; opacity: 0.85; }
.arrows-grey { stroke: #8d8d8d; }
.arrows-violet { stroke: #9a5fb5; }
.scale text {
    font-family: "Liberation Sans", sans-serif;
    font-size: 10.5px;
    font-weight: 700;
    fill: #555;
    text-anchor: middle;
}
.credit {
    font-family: "Liberation Sans", sans-serif;
    font-size: 12px;
    font-weight: 700;
    fill: #5a7070;
}
.big-credit {
    font-size: 15px;
}
.credit-mark {
    fill: none;
    stroke: #c0392b;
    stroke-width: 1.2;
}

/* Map controls, they float over the map */
.zoom-ctrl {
    position: absolute;
    left: 25px;
    top: 25px;
    width: 39px;
    background: #fff;
    border: 1px solid #444;
    border-radius: 7px;
    overflow: hidden;
}
.ctrl-btn {
    display: flex;
    align-items: center;
    justify-content: center;
    width: 39px;
    height: 38.5px;
    padding: 0;
    border: 0;
    background: #fff;
}
.zoom-ctrl .ctrl-btn:first-child {
    border-bottom: 1px solid #555;
}
.ctrl-btn svg {
    width: 20px;
    height: 20px;
    fill: none;
    stroke: #3a3a3a;
    stroke-width: 2.3;
}
.home-btn {
    position: absolute;
    left: 25px;
    top: 138px;
    width: 40px;
    height: 43px;
    border: 1px solid #444;
    border-radius: 7px;
}
.home-btn svg {
    width: 26px;
    height: 24px;
    stroke: none;
}
.search {
    position: absolute;
    left: 88px;
    top: 25px;
    width: 290px;
    height: 35px;
    box-sizing: border-box;
    background: #fff;
    border: 1px solid #444;
    border-radius: 7px;
    display: flex;
    align-items: center;
    justify-content: space-between;
    padding: 0 8px;
}
.search-hint {
    font-size: 16px;
    font-style: italic;
    color: #8d8d8d;
    margin-bottom: 2px;
}
.ico-search {
    width: 22px;
    height: 22px;
    fill: none;
    stroke: #666;
    stroke-width: 1.5;
}

.panel {
    position: absolute;
    background: #fff;
    border: 1px solid #c9d3e3;
    box-sizing: border-box;
}
.panel-head {
    height: 30px;
    box-sizing: border-box;
    display: flex;
    align-items: center;
    padding: 0 0 5px 9px;
    background: linear-gradient(to bottom, #f1f6fc, #cfe2f6);
    border-bottom: 1px solid #c2d0e2;
    color: #111;
    font-size: 16.2px;
}
.caret {
    width: 0;
    height: 0;
    border-left: 4.5px solid transparent;
    border-right: 4.5px solid transparent;
    border-top: 5px solid #222;
    margin: 3px 5px 0 0;
}
.ico-pin {
    width: 13px;
    height: 18px;
    margin-left: 8px;
}
.panel-close {
    margin-left: auto;
    margin-right: 11px;
    color: #888;
    font-weight: 700;
    font-size: 15px;
}

.info-panel {
    left: 88px;
    top: 76px;
    width: 293px;
    height: 261px;
}
.info-box {
    margin: 12px 13px 0;
    height: 205px;
    box-sizing: border-box;
    border: 1px solid #b9c3d6;
    border-bottom-width: 2px;
    padding: 15px 16px 0;
    color: #5b5b5b;
    font-size: 15.1px;
}
.info-title {
    font-weight: 700;
    font-size: 15px;
    line-height: 20px;
}
.info-desc {
    margin-top: 3px;
    line-height: 18px;
}
.info-link {
    margin-top: 4px;
    line-height: 19px;
    color: #0000e6;
}
.info-table {
    margin-top: 7px;
    display: grid;
    grid-template-columns: 110px 1fr;
    grid-auto-rows: 21.3px;
    align-items: center;
    font-size: 13.8px;
}

.tabs {
    position: absolute;
    left: 1650px;
    top: 25px;
    width: 245px;
    height: 37px;
    box-sizing: border-box;
    background: #fff;
    border: 1px solid #666;
    border-radius: 7px;
    display: flex;
    align-items: center;
    justify-content: center;
    gap: 13px;
}
.tab {
    width: 65px;
    height: 24px;
    padding: 0;
    font-family: "Liberation Sans", sans-serif;
    font-size: 11.5px;
    color: #666;
    background: #eee;
    border: 1px solid #ddd;
    border-radius: 2px;
}
.tab.off {
    background: #fff;
}

.legend-panel {
    left: 1649px;
    top: 76px;
    width: 246px;
    height: 368px;
}
.legend-scroll {
    margin-top: 9px;
    height: 321px;
    overflow: hidden;
    padding-left: 33px;
    color: #4a1a0a;
    font-size: 13.8px;
    line-height: 16px;
}
.legend-row {
    display: flex;
    align-items: center;
    gap: 6px;
    height: 41px;
}
.legend-row.two {
    height: 44.5px;
}
.legend-row.first {
    margin-top: 2px;
}
.legend-row.last {
    margin-top: 1px;
}
.legend-row.cut {
    margin-top: -27px;
    height: 34px;
    padding-bottom: 7px;
    align-items: flex-end;
}
.swatch {
    width: 19px;
    height: 19px;
    border: 1.5px solid #8e8e8e;
    border-radius: 2px;
    flex: none;
}
.swatch.hidden {
    visibility: hidden;
}
.s-mfg { background: #a020f0; }
.s-multi { background: #c24ffb; }
.s-office { background: #b9b9b9; }
.s-single { background: #ffff99; }
.s-two { background: #ffff22; }
.s-mf { background: #e9e60f; }
.s-urban { background: #4fcf4f; }
```
